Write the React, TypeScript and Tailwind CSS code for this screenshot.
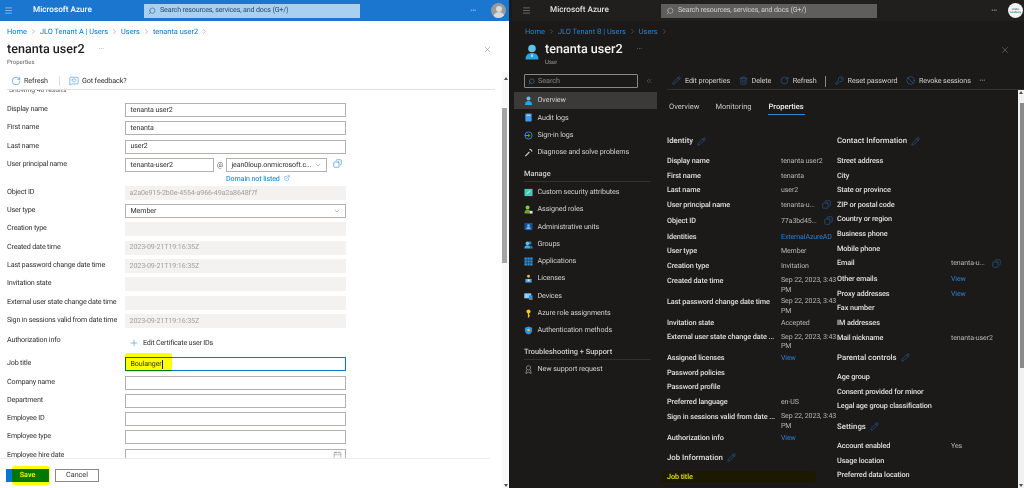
import React from 'react';
import { ChevronRight, ChevronDown, ChevronsLeft, Copy, Pencil, Plus, RotateCw, Search, X, Menu, Trash2, KeyRound, Ban, ExternalLink, Calendar, MessageSquareHeart } from 'lucide-react';

const font = { fontFamily: 'Roboto, "Noto Sans", sans-serif' };

const Crumbs = ({ items, dark }: { items: string[]; dark?: boolean }) => (
  <div className={`h-[21px] shrink-0 flex items-center text-[7.4px] ${dark ? 'text-[#2f80c9] pl-[13px]' : 'text-[#0078d4] pl-[7px]'}`}>
    {items.map((t) => (
      <React.Fragment key={t}>
        <span>{t}</span>
        <ChevronRight className={`w-[7px] h-[7px] mx-[3px] ${dark ? 'text-[#8a8886]' : 'text-[#605e5c]'}`} strokeWidth={1.5} />
      </React.Fragment>
    ))}
  </div>
);

const Box = ({ children, disabled, active, className = 'w-[221px]' }: { children?: React.ReactNode; disabled?: boolean; active?: boolean; className?: string }) => (
  <div
    className={`h-[14px] flex items-center px-[4.5px] text-[7.1px] tracking-[-0.1px] shrink-0 ${className} ${
      disabled ? 'bg-[#f3f2f1] text-[#a19f9d]' : active ? 'bg-white border border-[#0078d4] text-[#323130]' : 'bg-white border border-[#b3b0ad] text-[#323130]'
    }`}
  >
    {children}
  </div>
);

const Row = ({ label, children }: { label: string; children?: React.ReactNode }) => (
  <div className="h-[18.3px] flex text-[7.2px] tracking-[-0.2px] text-[#323130]">
    <div className="w-[125px] pl-[7px] leading-[11px] shrink-0 whitespace-nowrap">{label}</div>
    {children}
  </div>
);

const LeftPane = () => (
  <div className="w-[509px] h-full bg-white flex flex-col shrink-0 overflow-hidden">
    <div className="h-[21px] bg-[#1a76cf] flex items-center text-white shrink-0">
      <Menu className="w-[9px] h-[9px] ml-[4px] text-[#cfe2f5]" strokeWidth={1.5} />
      <span className="ml-[20px] text-[8.2px] font-medium w-[111px]">Microsoft Azure</span>
      <div className="w-[216px] h-[14px] bg-[#a9d0f0] flex items-center text-[#2b4a66] text-[7.1px] tracking-[-0.15px]">
        <Search className="w-[8px] h-[8px] ml-[4px] mr-[4px] scale-x-[-1]" strokeWidth={1.5} />
        Search resources, services, and docs (G+/)
      </div>
      <span className="ml-auto mr-[15px] text-[8px] leading-none tracking-tight">···</span>
      <div className="w-[15px] h-[15px] rounded-full bg-[#9a9a9a] mr-[3px] overflow-hidden flex flex-col items-center">
        <div className="w-[6px] h-[6px] rounded-full bg-[#d9d9d9] mt-[2.5px]" />
        <div className="w-[12px] h-[6px] rounded-t-full bg-[#d9d9d9] mt-[0.5px]" />
      </div>
    </div>
    <Crumbs items={['Home', 'JLO Tenant A | Users', 'Users', 'tenanta user2']} />
    <div className="h-[30px] pl-[7px] pr-[17px] flex items-start shrink-0">
      <div>
        <div className="text-[12.6px] leading-[16px] font-medium text-[#201f1e]">tenanta user2</div>
        <div className="text-[6px] leading-[8px] mt-[1px] text-[#605e5c]">Properties</div>
      </div>
      <span className="ml-[14px] mt-[4px] text-[7px] leading-none text-[#8a8886]">···</span>
      <X className="ml-auto mt-[3px] w-[9px] h-[9px] text-[#605e5c]" strokeWidth={1} />
    </div>
    <div className="flex-1 min-h-0 flex">
      <div className="w-[502px] flex flex-col">
        <div className="h-[18px] mx-[7px] pt-[1px] flex items-center border-b border-[#e1dfdd] text-[7.2px] tracking-[-0.1px] text-[#323130] shrink-0">
          <RotateCw className="w-[10px] h-[10px] mr-[3px] ml-[4px] text-[#0078d4]" strokeWidth={1.2} />
          Refresh
          <span className="w-px h-[10px] bg-[#e1dfdd] ml-[11px] mr-[9px]" />
          <MessageSquareHeart className="w-[10px] h-[10px] mr-[3px] text-[#0078d4]" strokeWidth={1.2} />
          Got feedback?
        </div>
        <div className="flex-1 min-h-0 overflow-hidden relative">
          <div className="h-[12px] -mt-[5px] pl-[9px] text-[6.8px] leading-[10px] text-[#605e5c]">Showing 40 results</div>
          <div className="h-[6px]" />
          <Row label="Display name"><Box>tenanta user2</Box></Row>
          <Row label="First name"><Box>tenanta</Box></Row>
          <Row label="Last name"><Box>user2</Box></Row>
          <div className="h-[28px] flex text-[7.2px] tracking-[-0.2px] text-[#323130]">
            <div className="w-[125px] pl-[7px] leading-[11px] shrink-0">User principal name</div>
            <div>
              <div className="flex items-center">
                <Box className="w-[89px]">tenanta-user2</Box>
                <span className="w-[12px] text-center text-[7px] text-[#605e5c]">@</span>
                <Box className="w-[101px] justify-between">
                  <span>jean0loup.onmicrosoft.c...</span>
                  <ChevronDown className="w-[8px] h-[8px] text-[#605e5c]" strokeWidth={1.2} />
                </Box>
                <Copy className="ml-[6px] -mt-[3px] w-[9px] h-[9px] text-[#0078d4] scale-x-[-1]" strokeWidth={1.4} />
              </div>
              <div className="ml-[101px] mt-[1px] flex items-center text-[7.1px] tracking-[-0.1px] leading-[11px] text-[#0078d4]">
                Domain not listed
                <ExternalLink className="w-[6px] h-[6px] ml-[4px]" strokeWidth={1.4} />
              </div>
            </div>
          </div>
          <Row label="Object ID"><Box disabled>a2a0e915-2b0e-4554-a966-49a2a8648f7f</Box></Row>
          <Row label="User type">
            <Box className="w-[221px] justify-between">
              <span>Member</span>
              <ChevronDown className="w-[8px] h-[8px] text-[#605e5c]" strokeWidth={1.2} />
            </Box>
          </Row>
          <Row label="Creation type"><Box disabled /></Row>
          <Row label="Created date time"><Box disabled>2023-09-21T19:16:35Z</Box></Row>
          <Row label="Last password change date time"><Box disabled>2023-09-21T19:16:35Z</Box></Row>
          <Row label="Invitation state"><Box disabled /></Row>
          <Row label="External user state change date time"><Box disabled /></Row>
          <Row label="Sign in sessions valid from date time"><Box disabled>2023-09-21T19:16:35Z</Box></Row>
          <div className="h-[25px] flex text-[7.2px] tracking-[-0.2px] text-[#323130]">
            <div className="w-[129px] pl-[7px] mt-[2px] leading-[11px] shrink-0">Authorization info</div>
            <div className="flex items-center h-[20px] mt-[1px]">
              <Plus className="w-[10px] h-[10px] text-[#0078d4] mr-[4px]" strokeWidth={1.1} />
              Edit Certificate user IDs
            </div>
          </div>
          <Row label="Job title"><Box active>Boulanger<span className="w-px h-[9px] bg-[#201f1e]" /></Box></Row>
          <Row label="Company name"><Box /></Row>
          <Row label="Department"><Box /></Row>
          <Row label="Employee ID"><Box /></Row>
          <Row label="Employee type"><Box /></Row>
          <Row label="Employee hire date">
            <Box className="w-[221px] justify-end"><Calendar className="w-[9px] h-[9px] -mr-[1px] text-[#605e5c]" strokeWidth={1} /></Box>
          </Row>
          <div className="absolute left-[125px] top-[263px] w-[47px] h-[19px] bg-[#ffff00] rounded-[3px] mix-blend-multiply" />
        </div>
        <div className="h-[30px] shrink-0 mr-[12px] border-t border-[#edebe9] flex items-center gap-[6px] pl-[6px] pt-[3px] relative">
          <div className="w-[43px] h-[13px] bg-[#0078d4] text-white text-[7.2px] font-medium flex items-center justify-center">Save</div>
          <div className="w-[44px] h-[13px] border border-[#8a8886] text-[#323130] text-[7.2px] flex items-center justify-center">Cancel</div>
          <div className="absolute left-[12px] top-[7px] w-[38px] h-[19px] bg-[#ffff00] rounded-[3px] mix-blend-multiply" />
        </div>
      </div>
      <div className="w-[7px] flex flex-col items-center justify-between bg-[#f8f8f8] pt-[5px] pb-[1px] shrink-0 relative">
        <div className="w-0 h-0 border-x-[2.5px] border-x-transparent border-b-[3px] border-b-[#505050]" />
        <div className="absolute top-[36px] left-[0px] w-[5px] h-[155px] bg-[#a3a3a3]" />
        <div className="w-0 h-0 border-x-[2.5px] border-x-transparent border-t-[3px] border-t-[#505050]" />
      </div>
    </div>
  </div>
);

type Kind = 'user' | 'book' | 'signin' | 'wrench' | 'tag' | 'role' | 'admin' | 'group' | 'apps' | 'license' | 'device' | 'key' | 'shield' | 'support';

const SideIcon = ({ kind }: { kind: Kind }) => {
  const c = 'w-[9px] h-[9px] shrink-0';
  switch (kind) {
    case 'user':
      return <svg viewBox="0 0 10 10" className={c}><circle cx="5" cy="2.8" r="2.2" fill="#5ec4ee" /><path d="M1 10c0-3 1.600-4.500 4-4.500S9 7 9 10z" fill="#2aa3de" /></svg>;
    case 'book':
      return <svg viewBox="0 0 10 10" className={c}><rect x="1.500" y="0.500" width="7" height="9" rx="0.800" fill="#3f9bec" /><rect x="3" y="2" width="4" height="1" fill="#d6ecff" /></svg>;
    case 'signin':
      return <svg viewBox="0 0 10 10" className={c} fill="none"><circle cx="5" cy="5" r="4" stroke="#2f8fd8" strokeWidth="1" /><path d="M1 5h5M4.500 3l2 2-2 2" stroke="#7fba00" strokeWidth="1" /></svg>;
    case 'wrench':
      return <svg viewBox="0 0 10 10" className={c} fill="none"><path d="M1.500 9 6 4.500M6 1.500a2.200 2.200 0 0 1 2.500 2.500" stroke="#c8c6c4" strokeWidth="1.400" /></svg>;
    case 'tag':
      return <svg viewBox="0 0 10 10" className={c}><rect x="0.500" y="1" width="9" height="8" fill="#46c9b4" /><path d="M3 6.500 7 3" stroke="#d8fff5" strokeWidth="1" /></svg>;
    case 'role':
      return <svg viewBox="0 0 10 10" className={c}><circle cx="4" cy="2.800" r="2.200" fill="#8cc63f" /><path d="M0.500 9.500c0-3 1.400-4.400 3.500-4.400s3 1 3.300 4.400z" fill="#6aa62a" /><rect x="6.500" y="6.500" width="3" height="3" fill="#e0e0e0" /></svg>;
    case 'admin':
      return <svg viewBox="0 0 10 10" className={c}><rect x="0.500" y="1" width="9" height="8" fill="#1b4f8f" /><circle cx="5" cy="4" r="1.600" fill="#66b5ee" /><path d="M2.500 8c0-2 1-2.800 2.500-2.800S7.500 6 7.500 8z" fill="#66b5ee" /></svg>;
    case 'group':
      return <svg viewBox="0 0 10 10" className={c}><circle cx="6.500" cy="3.200" r="1.800" fill="#2a7fc4" /><circle cx="3.800" cy="3.800" r="2" fill="#5ec4ee" /><path d="M0.300 9.500c0-2.600 1.400-3.800 3.500-3.800s3.500 1.200 3.500 3.800z" fill="#3fa9e4" /><path d="M7.500 9.500h2.200c0-2.300-1-3.500-2.700-3.500z" fill="#2a7fc4" /></svg>;
    case 'apps':
      return <svg viewBox="0 0 10 10" className={c} fill="#2f8fe0"><rect x="0.500" y="0.500" width="2.600" height="2.600" /><rect x="3.700" y="0.500" width="2.600" height="2.600" /><rect x="6.900" y="0.500" width="2.600" height="2.600" /><rect x="0.500" y="3.700" width="2.600" height="2.600" /><rect x="3.700" y="3.700" width="2.600" height="2.600" /><rect x="6.900" y="3.700" width="2.600" height="2.600" /><rect x="0.500" y="6.900" width="2.600" height="2.600" /><rect x="3.700" y="6.900" width="2.600" height="2.600" /><rect x="6.900" y="6.900" width="2.600" height="2.600" /></svg>;
    case 'license':
      return <svg viewBox="0 0 10 10" className={c}><circle cx="5" cy="2.500" r="1.600" fill="#e8b35a" /><path d="M1.500 9.500V5.500h7v4z" fill="#4aa3df" /><rect x="4" y="6" width="2" height="2" fill="#e0f0fa" /></svg>;
    case 'device':
      return <svg viewBox="0 0 10 10" className={c}><rect x="0.300" y="1.500" width="7.700" height="5.500" fill="#8fd0f5" /><rect x="5.500" y="3.500" width="4" height="5.500" rx="0.500" fill="#2f8fe0" /></svg>;
    case 'key':
      return <svg viewBox="0 0 10 10" className={c}><circle cx="5" cy="2.800" r="2.300" fill="#f5c518" /><rect x="4.300" y="4.500" width="1.400" height="5" fill="#f5c518" /><rect x="5.500" y="7" width="1.200" height="1" fill="#f5c518" /></svg>;
    case 'shield':
      return <svg viewBox="0 0 10 10" className={c}><path d="M5 0.500 9 2v3c0 2.500-2 4-4 4.500C3 9 1 7.500 1 5V2z" fill="#2f8fe0" /><circle cx="5" cy="4.500" r="1.500" fill="#f5c518" /></svg>;
    default:
      return <svg viewBox="0 0 10 10" className={c} fill="none" stroke="#a19f9d" strokeWidth="0.800"><circle cx="5" cy="3.200" r="2.400" /><path d="M3 5.500 2 9.500l3-1.500 3 1.500-1-4" /></svg>;
  }
};

const SideItem = ({ kind, label, active }: { kind: Kind; label: string; active?: boolean }) => (
  <div className={`h-[17.3px] flex items-center pl-[10px] gap-[4.500px] text-[7.2px] tracking-[-0.1px] shrink-0 ${active ? 'bg-[#3b3a39]' : ''} text-[#d2d0ce] whitespace-nowrap`}>
    <SideIcon kind={kind} />
    {label}
  </div>
);

const Sidebar = () => (
  <div className="w-[145px] shrink-0 pl-[2px] flex flex-col">
    <div className="h-[20px] flex items-start shrink-0 pl-[10px] pt-[2px] gap-[7px]">
      <div className="w-[114px] h-[14px] border border-[#8a8886] rounded-[1px] flex items-center text-[7.2px] text-[#8a8886] pl-[3px]">
        <Search className="w-[7px] h-[7px] mr-[3px] text-[#4a9ae0] scale-x-[-1]" strokeWidth={1.5} />
        Search
      </div>
      <ChevronsLeft className="w-[8px] h-[8px] mt-[3px] text-[#8a8886]" strokeWidth={1.2} />
    </div>
    <SideItem kind="user" label="Overview" active />
    <SideItem kind="book" label="Audit logs" />
    <SideItem kind="signin" label="Sign-in logs" />
    <SideItem kind="wrench" label="Diagnose and solve problems" />
    <div className="h-[15px] mt-[5.500px] ml-[10px] mr-[6px] text-[7.4px] font-medium text-[#d2d0ce] leading-[13px] border-b border-[#323130]">Manage</div>
    <div className="h-[2px]" />
    <SideItem kind="tag" label="Custom security attributes" />
    <SideItem kind="role" label="Assigned roles" />
    <SideItem kind="admin" label="Administrative units" />
    <SideItem kind="group" label="Groups" />
    <SideItem kind="apps" label="Applications" />
    <SideItem kind="license" label="Licenses" />
    <SideItem kind="device" label="Devices" />
    <SideItem kind="key" label="Azure role assignments" />
    <SideItem kind="shield" label="Authentication methods" />
    <div className="h-[15px] mt-[6px] ml-[10px] mr-[6px] text-[7.4px] font-medium text-[#d2d0ce] leading-[13px] border-b border-[#323130]">Troubleshooting + Support</div>
    <SideItem kind="support" label="New support request" />
  </div>
);

const Heading = ({ title, h }: { title: string; h: string }) => (
  <div className={`${h} flex items-center text-[7.8px] font-medium text-[#e1dfdd]`}>
    {title}
    <Pencil className="w-[9px] h-[9px] ml-[4px] text-[#2b6cb8]" strokeWidth={1.4} />
  </div>
);

const Prop = ({ label, value, link, copy, wrap, h = 'h-[14.600px]' }: { label: string; value?: string; link?: boolean; copy?: boolean; wrap?: boolean; h?: string }) => (
  <div className={`${h} flex items-start text-[7.3px] leading-[14px]`}>
    <div className="w-[114px] shrink-0 font-medium tracking-[-0.1px] whitespace-nowrap text-[#e1dfdd]">{label}</div>
    {value && (
      <div className={`flex items-center text-[7px] tracking-[-0.1px] ${link ? 'text-[#2f7ed0]' : 'text-[#b8b6b4]'} ${wrap ? 'leading-[9.500px] pt-[2.500px]' : ''}`}>
        <span className={wrap ? 'block w-[56px]' : 'whitespace-nowrap'}>{value}</span>
        {copy && <Copy className="ml-[7px] w-[9px] h-[9px] text-[#2b6cb8] scale-x-[-1]" strokeWidth={1.4} />}
      </div>
    )}
  </div>
);

const Cmd = ({ icon, label }: { icon: React.ReactNode; label: string }) => (
  <div className="flex items-center gap-[4px] whitespace-nowrap">{icon}{label}</div>
);

const SideIconLarge = () => (
  <svg viewBox="0 0 14 16" className="w-[14px] h-[16px] shrink-0 mt-[2px]">
    <circle cx="7" cy="4.500" r="3.800" fill="#5ec4ee" />
    <path d="M0.500 15.500c0-4.500 2.500-6.500 6.500-6.500s6.500 2 6.500 6.500z" fill="#2aa3de" />
    <path d="M7 9.500 6 12l1 1.500L8 12z" fill="#d8f2ff" />
  </svg>
);

const RightPane = () => (
  <div className="flex-1 min-w-0 h-full bg-[#1b1a19] flex flex-col overflow-hidden">
    <div className="h-[21px] bg-[#201f1e] flex items-center text-[#e1dfdd] shrink-0">
      <Menu className="w-[9px] h-[9px] ml-[10px] text-[#a19f9d]" strokeWidth={1.5} />
      <span className="ml-[19px] text-[8.2px] font-medium w-[111px]">Microsoft Azure</span>
      <div className="w-[216px] h-[14px] bg-[#605e5c] flex items-center text-[#d2d0ce] text-[7.1px] tracking-[-0.15px]">
        <Search className="w-[8px] h-[8px] ml-[5px] mr-[4px] scale-x-[-1]" strokeWidth={1.5} />
        Search resources, services, and docs (G+/)
      </div>
      <span className="ml-auto mr-[11px] text-[8px] leading-none tracking-tight">···</span>
      <div className="w-[15px] h-[15px] rounded-full bg-[#f3f3f3] mr-[1px] flex items-center justify-center text-[2.600px] leading-[3px] text-[#1e7b6e] text-center font-bold">LEVEL<br />Academy</div>
    </div>
    <Crumbs dark items={['Home', 'JLO Tenant B | Users', 'Users']} />
    <div className="h-[30px] pl-[13px] pr-[14px] flex items-start shrink-0">
      <SideIconLarge />
      <div className="ml-[6px]">
        <div className="text-[12.6px] leading-[16px] font-medium text-[#f3f2f1]">tenanta user2</div>
        <div className="text-[6px] leading-[8px] mt-[1px] text-[#a19f9d]">User</div>
      </div>
      <span className="ml-[14px] mt-[4px] text-[7px] leading-none text-[#a19f9d]">···</span>
      <X className="ml-auto mt-[3px] w-[10px] h-[10px] text-[#a19f9d]" strokeWidth={1} />
    </div>
    <div className="flex-1 min-h-0 flex">
      <Sidebar />
      <div className="flex-1 min-w-0 flex flex-col relative">
        <div className="h-[18px] ml-[10px] pt-[1px] flex items-center gap-[8.5px] border-b border-[#323130] text-[7.2px] tracking-[-0.1px] text-[#d2d0ce] shrink-0 pl-[5px]">
          <Cmd icon={<Pencil className="w-[9px] h-[9px] text-[#2b6cb8]" strokeWidth={1.4} />} label="Edit properties" />
          <Cmd icon={<Trash2 className="w-[9px] h-[9px] text-[#2b6cb8]" strokeWidth={1.4} />} label="Delete" />
          <Cmd icon={<RotateCw className="w-[9px] h-[9px] text-[#2b6cb8]" strokeWidth={1.4} />} label="Refresh" />
          <span className="w-px h-[11px] bg-[#8a8886]" />
          <Cmd icon={<KeyRound className="w-[9px] h-[9px] text-[#2b6cb8]" strokeWidth={1.4} />} label="Reset password" />
          <Cmd icon={<Ban className="w-[9px] h-[9px] text-[#2b6cb8]" strokeWidth={1.4} />} label="Revoke sessions" />
          <span className="text-[8px] leading-none text-[#d2d0ce]">···</span>
        </div>
        <div className="flex-1 min-h-0 flex">
          <div className="flex-1 min-w-0 pl-[10px]">
            <div className="h-[39px]">
              <div className="h-[24px] flex items-start gap-[16px] text-[7.5px] text-[#c8c6c4] pl-[2px] pt-[11px]">
                <span>Overview</span>
                <span>Monitoring</span>
                <span className="text-[#f3f2f1] font-medium border-b border-[#2b88d8] h-[14px] px-[1px]">Properties</span>
              </div>
            </div>
            <div className="flex">
              <div className="w-[170px] shrink-0">
                <Heading title="Identity" h="h-[24px]" />
                <div className="h-[1px]" />
                <Prop label="Display name" value="tenanta user2" />
                <Prop label="First name" value="tenanta" />
                <Prop label="Last name" value="user2" />
                <Prop label="User principal name" value="tenanta-u..." copy h="h-[16px]" />
                <Prop label="Object ID" value="77a3bd45..." copy h="h-[16px]" />
                <Prop label="Identities" value="ExternalAzureAD" link />
                <Prop label="User type" value="Member" />
                <Prop label="Creation type" value="Invitation" />
                <Prop label="Created date time" value="Sep 22, 2023, 3:43 PM" wrap h="h-[21px]" />
                <Prop label="Last password change date time" value="Sep 22, 2023, 3:43 PM" wrap h="h-[21px]" />
                <Prop label="Invitation state" value="Accepted" />
                <Prop label="External user state change date ..." value="Sep 22, 2023, 3:43 PM" wrap h="h-[21px]" />
                <Prop label="Assigned licenses" value="View" link />
                <Prop label="Password policies" />
                <Prop label="Password profile" />
                <Prop label="Preferred language" value="en-US" />
                <Prop label="Sign in sessions valid from date ..." value="Sep 22, 2023, 3:43 PM" wrap h="h-[21px]" />
                <Prop label="Authorization info" value="View" link />
                <Heading title="Job Information" h="h-[25px]" />
                <Prop label="Job title" />
              </div>
              <div className="flex-1 min-w-0">
                <Heading title="Contact Information" h="h-[24px]" />
                <div className="h-[1px]" />
                <Prop label="Street address" />
                <Prop label="City" />
                <Prop label="State or province" />
                <Prop label="ZIP or postal code" />
                <Prop label="Country or region" />
                <Prop label="Business phone" />
                <Prop label="Mobile phone" />
                <Prop label="Email" value="tenanta-u..." copy h="h-[16px]" />
                <Prop label="Other emails" value="View" link />
                <Prop label="Proxy addresses" value="View" link />
                <Prop label="Fax number" />
                <Prop label="IM addresses" />
                <Prop label="Mail nickname" value="tenanta-user2" />
                <Heading title="Parental controls" h="h-[25px]" />
                <Prop label="Age group" />
                <Prop label="Consent provided for minor" />
                <Prop label="Legal age group classification" />
                <Heading title="Settings" h="h-[25px]" />
                <Prop label="Account enabled" value="Yes" />
                <Prop label="Usage location" />
                <Prop label="Preferred data location" />
              </div>
            </div>
          </div>
          <div className="w-[6px] shrink-0 bg-[#f1f1f1] flex flex-col items-center justify-between relative py-[1px]">
            <div className="w-0 h-0 border-x-[2.5px] border-x-transparent border-b-[3px] border-b-[#505050]" />
            <div className="absolute top-[13px] right-0 w-[4px] h-[265px] bg-[#8a8a8a]" />
            <div className="w-0 h-0 border-x-[2.5px] border-x-transparent border-t-[3px] border-t-[#505050]" />
          </div>
        </div>
        <div className="absolute left-[5px] top-[399px] w-[154px] h-[12px] bg-[#ffff00] rounded-[2px] mix-blend-multiply" />
      </div>
    </div>
  </div>
);

export default function App() {
  return (
    <div className="w-[1024px] h-[488px] flex bg-[#1a1a1a] overflow-hidden [text-rendering:geometricPrecision]" style={font}>
      <LeftPane />
      <div className="w-[3px] shrink-0 bg-[#1a1a1a]" />
      <RightPane />
    </div>
  );
}
